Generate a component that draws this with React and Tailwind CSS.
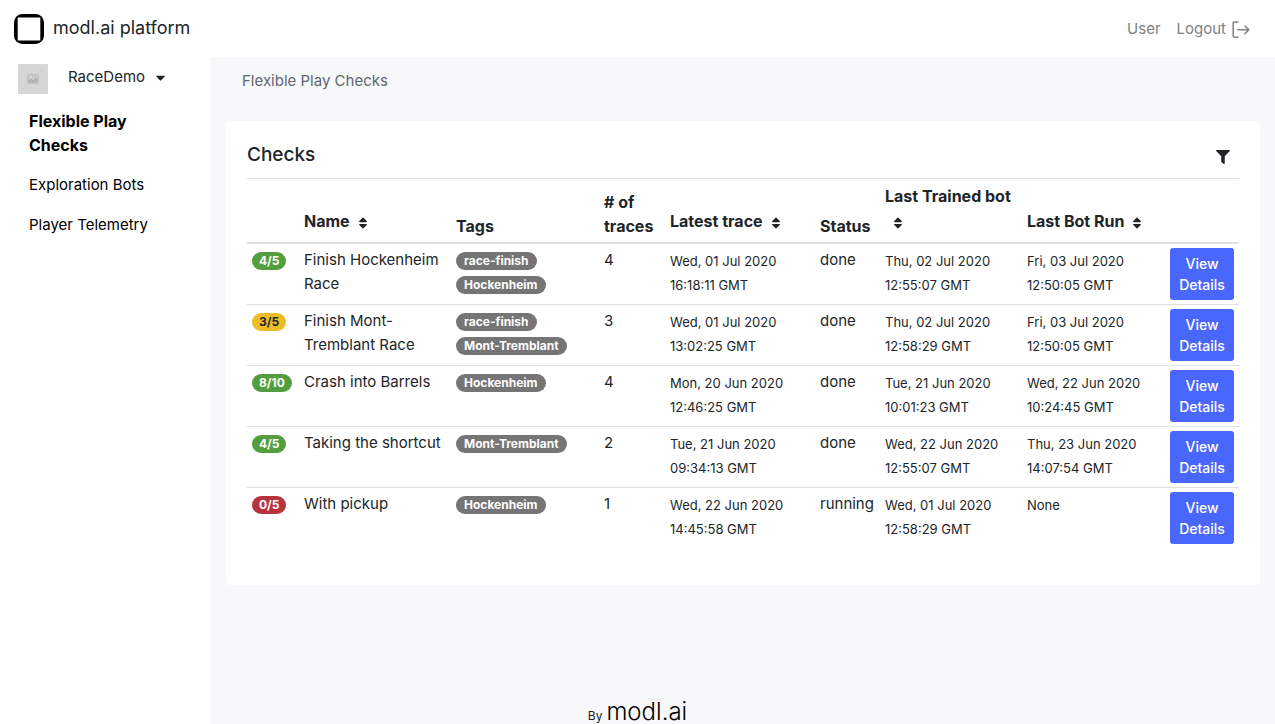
import { useState } from 'react';
import { FaSort, FaFilter, FaCaretDown } from 'react-icons/fa';

const BADGE = {
    good: 'bg-[#539e3e] text-white',
    warn: 'bg-[#ecbd27] text-[#212529]',
    bad: 'bg-[#b9333f] text-white',
};

const NAV = ['Flexible Play Checks', 'Exploration Bots', 'Player Telemetry'];

const COLUMNS = [
    { key: 'score', label: '', width: 'w-[52px]' },
    { key: 'name', label: 'Name', width: '', sortable: true },
    { key: 'tags', label: 'Tags', width: 'w-[148px]' },
    { key: 'traces', label: '# of traces', width: 'w-[66px]' },
    { key: 'latest', label: 'Latest trace', width: 'w-[150px]', sortable: true },
    { key: 'status', label: 'Status', width: 'w-[65px]' },
    { key: 'trained', label: 'Last Trained bot', width: 'w-[142px]', sortable: true },
    { key: 'run', label: 'Last Bot Run', width: 'w-[143px]', sortable: true },
    { key: 'actions', label: '', width: 'w-[74px]' },
];

const CHECKS = [
    {
        score: '4/5', level: 'good', name: 'Finish Hockenheim Race', tags: ['race-finish', 'Hockenheim'], traces: 4, status: 'done',
        latest: 'Wed, 01 Jul 2020 16:18:11 GMT', trained: 'Thu, 02 Jul 2020 12:55:07 GMT', run: 'Fri, 03 Jul 2020 12:50:05 GMT',
    },
    {
        score: '3/5', level: 'warn', name: 'Finish Mont-Tremblant Race', tags: ['race-finish', 'Mont-Tremblant'], traces: 3, status: 'done',
        latest: 'Wed, 01 Jul 2020 13:02:25 GMT', trained: 'Thu, 02 Jul 2020 12:58:29 GMT', run: 'Fri, 03 Jul 2020 12:50:05 GMT',
    },
    {
        score: '8/10', level: 'good', name: 'Crash into Barrels', tags: ['Hockenheim'], traces: 4, status: 'done',
        latest: 'Mon, 20 Jun 2020 12:46:25 GMT', trained: 'Tue, 21 Jun 2020 10:01:23 GMT', run: 'Wed, 22 Jun 2020 10:24:45 GMT',
    },
    {
        score: '4/5', level: 'good', name: 'Taking the shortcut', tags: ['Mont-Tremblant'], traces: 2, status: 'done',
        latest: 'Tue, 21 Jun 2020 09:34:13 GMT', trained: 'Wed, 22 Jun 2020 12:55:07 GMT', run: 'Thu, 23 Jun 2020 14:07:54 GMT',
    },
    {
        score: '0/5', level: 'bad', name: 'With pickup', tags: ['Hockenheim'], traces: 1, status: 'running',
        latest: 'Wed, 22 Jun 2020 14:45:58 GMT', trained: 'Wed, 01 Jul 2020 12:58:29 GMT', run: 'None',
    },
];

function Logo() {
    return (
        <svg width="30" height="30" viewBox="0 0 30 30" aria-hidden="true">
            <rect width="30" height="30" rx="8.500" fill="#000" />
            <rect x="3.700" y="3.500" width="22.600" height="23" fill="#fff" />
        </svg>
    );
}

function LogoutIcon() {
    return (
        <svg width="18" height="18" viewBox="0 0 18 18" fill="none" stroke="currentColor" strokeWidth="1.5" strokeLinecap="round" strokeLinejoin="round" aria-hidden="true">
            <path d="M6 2H2.200a1 1 0 0 0-1 1v13.200a1 1 0 0 0 1 1H6" />
            <path d="M6 9.800h10.800M13 6l3.800 3.800-3.800 3.800" />
        </svg>
    );
}

function ProjectThumb() {
    return (
        <svg width="30" height="30" viewBox="0 0 30 30" aria-hidden="true">
            <rect width="30" height="30" fill="#d6d6d6" />
            <path d="M4 4l6 6M26 4l-6 6M4 26l6-6M26 26l-6-6" stroke="#cccccc" />
            <rect x="9.500" y="10.500" width="11" height="9" rx="1" fill="#c9c9c9" stroke="#bdbdbd" />
            <path d="M10.500 18.500v-2l2.500-2 2 2 3-3 1.500 1.500v3.500z" fill="#b0b0b0" />
            <circle cx="13" cy="13" r="1" fill="#dddddd" />
        </svg>
    );
}

function CheckRow({ check }) {
    return (
        <tr className="border-b border-[#dee2e6] align-top last:border-b-0">
            <td className="px-[5px] py-1">
                <span className={`inline-block rounded-full px-[7px] text-xs leading-[18px] font-bold ${BADGE[check.level]}`}>{check.score}</span>
            </td>
            <td className="px-[5px] py-1">{check.name}</td>
            <td className="px-[5px] py-1">
                {check.tags.map(tag => (
                    <div key={tag}>
                        <span className="inline-block rounded-full bg-[#757575] px-2 text-xs leading-[18px] font-bold text-white">{tag}</span>
                    </div>
                ))}
            </td>
            <td className="px-[5px] py-1">{check.traces}</td>
            <td className="px-[5px] pt-[5px] pb-1 text-[13px] leading-6">{check.latest}</td>
            <td className="px-[5px] py-1">{check.status}</td>
            <td className="px-[5px] pt-[5px] pb-1 text-[13px] leading-6">{check.trained}</td>
            <td className="px-[5px] pt-[5px] pb-1 text-[13px] leading-6">{check.run}</td>
            <td className="px-[5px] py-1">
                <button className="block w-full rounded-[3px] bg-[#4a67fd] px-2 py-[5px] text-sm leading-[21px] font-medium text-white">View Details</button>
            </td>
        </tr>
    );
}

export default function App() {
    const [active, setActive] = useState(NAV[0]);

    return (
        <div className="flex min-h-screen flex-col bg-white font-['Inter',sans-serif] text-[15px] leading-6 text-[#212529]">

            {/* Header */}
            <header className="flex h-[57px] items-center justify-between pr-[25px] pl-[14px]">
                <a href="#" className="flex gap-[9px] text-lg leading-7">
                    <Logo />
                    modl.ai platform
                </a>
                <nav className="flex items-center gap-4 text-[#808080]">
                    <a href="#user">User</a>
                    <a href="#logout" className="flex items-center gap-[6px]">
                        Logout
                        <LogoutIcon />
                    </a>
                </nav>
            </header>

            <div className="flex flex-1">
                {/* Sidebar */}
                <aside className="w-[211px] shrink-0 pt-[7px]">
                    <div className="flex pl-[18px]">
                        <ProjectThumb />
                        <button className="ml-5 flex h-[26px] items-center gap-2">
                            RaceDemo
                            <FaCaretDown size={15} />
                        </button>
                    </div>
                    <nav className="mt-[15px] flex flex-col gap-4 pr-12 pl-[29px] text-black">
                        {NAV.map(item => (
                            <a key={item} href="#" onClick={() => setActive(item)} className={item === active ? 'text-base font-bold' : ''}>{item}</a>
                        ))}
                    </nav>
                </aside>

                <main className="flex min-w-0 flex-1 flex-col bg-[#f7f8fa] px-[15px]">
                    <div className="pt-3 pl-4 text-[#5f6670]">Flexible Play Checks</div>

                    {/* Checks */}
                    <section className="mt-7 rounded bg-white px-[21px] pt-[22px] pb-[37px]">
                        <div className="flex items-center justify-between border-b border-[#dee2e6] pr-[9px] pb-[11px]">
                            <h1 className="text-[19px] leading-6 font-medium">Checks</h1>
                            <button aria-label="Filter" className="pt-1"><FaFilter size={14} /></button>
                        </div>
                        <table className="w-full table-fixed text-left">
                            <thead className="text-base">
                                <tr className="border-b-2 border-[#dee2e6] align-bottom">
                                    {COLUMNS.map(col => (
                                        <th key={col.key} className={`pt-[5px] pb-1 pl-[5px] font-bold ${col.width}`}>
                                            {col.label}
                                            {col.sortable && (
                                                <button aria-label={`Sort by ${col.label}`} className="inline-block px-[6px] py-2 align-middle">
                                                    <FaSort size={14} />
                                                </button>
                                            )}
                                        </th>
                                    ))}
                                </tr>
                            </thead>
                            <tbody>
                                {CHECKS.map(check => <CheckRow key={check.name} check={check} />)}
                            </tbody>
                        </table>
                    </section>

                    <footer className="mt-auto flex items-baseline justify-center gap-1 pr-[211px] text-xs">
                        By
                        <a href="#" className="text-2xl leading-6 font-light text-black">modl.ai</a>
                    </footer>
                </main>
            </div>
        </div>
    );
}
